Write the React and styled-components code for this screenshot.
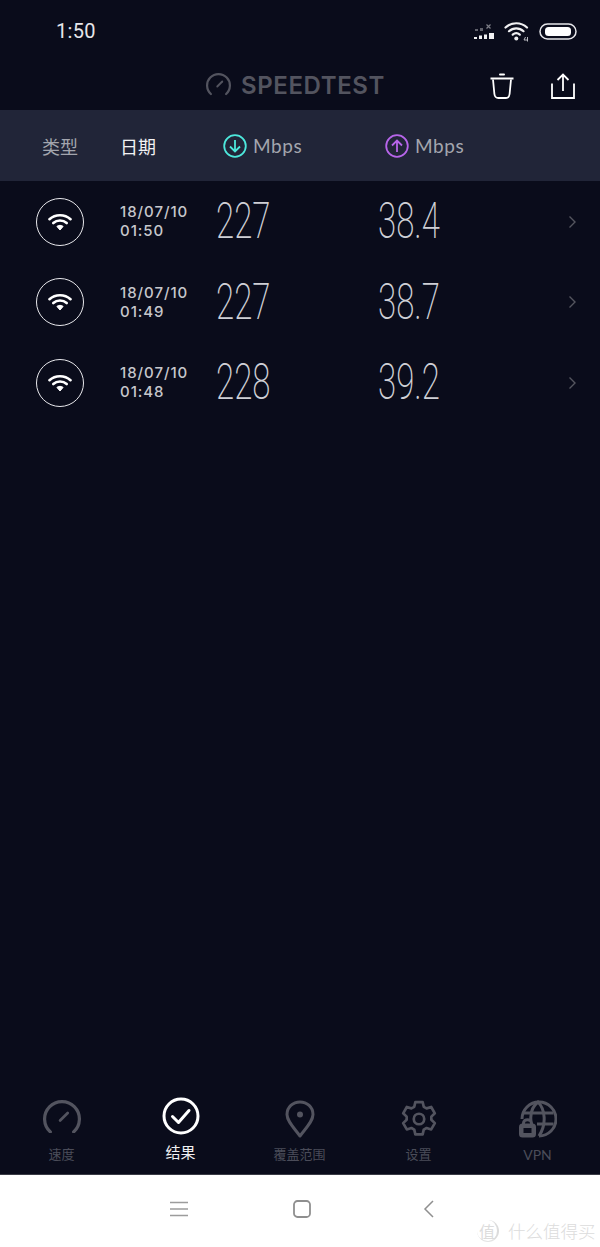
import React from "react";
import styled, { createGlobalStyle } from "styled-components";

const Global = createGlobalStyle`
  html, body { margin: 0; padding: 0; background: #0a0c1b; }
  #root { width: 600px; height: 1247px; }
  * { box-sizing: border-box; }
`;
const CJK = `"Noto Sans CJK SC", sans-serif`;

const Page = styled.div`
  width: 600px; height: 1247px; display: flex; flex-direction: column;
  background: #0a0c1b; font-family: Inter, ${CJK}; overflow: hidden; position: relative;
`;
const StatusBar = styled.div`
  height: 60px; display: flex; align-items: flex-start; justify-content: space-between;
  padding: 18px 23px 0 56px;
`;
const Clock = styled.span`
  font-family: Roboto, sans-serif; font-size: 20px; line-height: 26px; color: #e6e6ea; letter-spacing: .3px;
`;
const StatusIcons = styled.div`
  display: flex; align-items: center; gap: 9px; height: 26px;
`;
const TopBar = styled.header`
  height: 50px; display: grid; grid-template-columns: 206px 1fr auto; align-items: start; padding: 13px 25px 0 0;
`;
const Brand = styled.div`
  grid-column: 2; display: flex; align-items: flex-start; gap: 10px;
`;
const BrandName = styled.span`
  font-size: 24px; line-height: 26px; font-weight: 600; color: #53545f; letter-spacing: .6px;
`;
const TopActions = styled.div`
  display: flex; gap: 37px; grid-column: 3;
`;
const TableHead = styled.div`
  height: 71px; background: #212538; display: grid;
  grid-template-columns: 78px 103px 162px 1fr; padding-left: 42px; align-items: center;
`;
const HeadLabel = styled.span`
  font-size: 18px; line-height: 24px; color: ${p => (p.$active ? "#f2f2f4" : "#a3a5ae")}; font-family: ${CJK};
`;
const SpeedHead = styled.div`
  display: flex; align-items: center; gap: 6px;
`;
const Unit = styled.span`
  font-family: Lato, sans-serif; font-size: 19px; line-height: 24px; color: #a3a5ae; letter-spacing: .6px;
`;
const Rows = styled.div`
  flex: 1; padding-top: 0.5px;
`;
const Row = styled.div`
  height: 80.5px; display: grid; grid-template-columns: 84px 97px 162px 1fr 10px; padding: 0 22px 0 36px; align-items: center;
`;
const WifiBadge = styled.div`
  width: 48px; height: 48px; border-radius: 50%; border: 1.4px solid #e8e8ec;
  display: flex; align-items: center; justify-content: center;
`;
const DateBlock = styled.div`
  font-size: 15px; line-height: 19px; color: #c6c7cc; font-weight: 500; letter-spacing: .95px; margin-top: -1px;
`;
const Speed = styled.span`
  display: block; min-width: 0; font-family: Roboto, sans-serif; font-weight: 200; font-size: 50px; line-height: 50px;
  color: #cfd0d6; transform: scaleX(.66); transform-origin: left center; white-space: nowrap; margin: -1px 0 0 -1px;
`;
const Nav = styled.nav`
  height: 77px; display: grid; grid-template-columns: repeat(5, 119px); padding-left: 2px; flex: none;
`;
const NavItem = styled.div`
  display: flex; flex-direction: column; align-items: center;
`;
const NavIcon = styled.div`
  height: 40px; display: flex; align-items: flex-start; justify-content: center;
  padding-top: ${p => p.$drop || 0}px;
`;
const NavLabel = styled.span`
  font-family: ${p => (p.$latin ? "Lato, sans-serif" : CJK)};
  font-size: ${p => (p.$active ? 15 : p.$latin ? 14 : 13)}px; line-height: 18px;
  color: ${p => (p.$active ? "#f0f0f2" : "#4b4c59")};
  margin-top: ${p => (p.$active ? 6 : p.$latin ? 9 : 8)}px;
`;
const SystemBar = styled.div`
  height: 73px; flex: none; background: #fff; border-top: 1px solid #3a3b45; position: relative;
  padding: 25px 0 0 170px;
`;
const SysButtons = styled.div`
  display: grid; grid-template-columns: 123px 130px auto; align-items: center; width: max-content;
`;
const Watermark = styled.div`
  position: absolute; left: 477px; top: 45px; display: flex; align-items: center; gap: 9px; color: #dcdcdc;
`;
const WmBadge = styled.span`
  width: 22px; height: 22px; border-radius: 50%; border-right: 2px solid #dcdcdc; border-bottom: 1px solid #e4e4e4;
  display: flex; align-items: center; justify-content: center; font-family: ${CJK}; font-size: 16px; line-height: 20px;
`;
const WmText = styled.span`
  font-family: ${CJK}; font-size: 17.5px; line-height: 22px; white-space: nowrap; font-weight: 300;
`;

const Svg = ({ w, h, children, ...r }) => (
  <svg width={w} height={h} viewBox={`0 0 ${w} ${h}`} fill="none" style={{ display: "block" }} {...r}>{children}</svg>
);

const Gauge = ({ w, h, sw, c }) => {
  const r = w / 2 - sw / 2;
  const cx = w / 2, cy = r + sw / 2;
  const a = 42 * Math.PI / 180;
  const ex = r * Math.sin(a), ey = r * Math.cos(a);
  return (
    <Svg w={w} h={h}>
      <path d={`M${cx - ex} ${cy + ey}A${r} ${r} 0 1 1 ${cx + ex} ${cy + ey}`} stroke={c} strokeWidth={sw} strokeLinecap="round" />
      <path d={`M${cx - w * .05} ${cy + w * .04}L${cx + w * .15} ${cy - w * .16}`} stroke={c} strokeWidth={sw * .85} strokeLinecap="round" />
    </Svg>
  );
};

const Cell = () => (
  <Svg w={21} h={16}>
    <g fill="#60616b">
      <rect x="1" y="6" width="3" height="2" /><rect x="6" y="5" width="3" height="3" />
    </g>
    <path d="M12.500 1.500l4 4M16.500 1.500l-4 4" stroke="#7d7e87" strokeWidth="1.200" />
    <g fill="#f0f0f2">
      <rect x="0" y="14" width="3" height="2" /><rect x="5" y="12.500" width="3" height="3.500" />
      <rect x="10" y="11.500" width="3" height="4.500" /><rect x="15" y="10" width="5" height="6" />
    </g>
  </Svg>
);
const WifiGlyph = ({ w = 24, h = 18, sw = 2.6, c = "#fff" }) => (
  <svg width={w} height={h} viewBox="0 0 24 18" fill="none" style={{ display: "block" }}>
    <path d="M1.500 6.200C7.300.9 16.700.9 22.500 6.200" stroke={c} strokeWidth={sw} strokeLinecap="round" />
    <path d="M5.300 10C9 6.600 15 6.600 18.700 10" stroke={c} strokeWidth={sw} strokeLinecap="round" />
    <path d="M8.900 13.400C10.700 12 13.300 12 15.100 13.400L12 17z" fill={c} stroke={c} strokeWidth="1" strokeLinejoin="round" />
  </svg>
);
const StatusWifi = () => (
  <Svg w={26} h={22}>
    <path d="M1.500 7.500C7.500 1.800 17 1.800 23 7.500" stroke="#f0f0f2" strokeWidth="2.200" strokeLinecap="round" />
    <path d="M5 11.200C9.200 7.300 15.300 7.300 19.500 11.200" stroke="#f0f0f2" strokeWidth="2.200" strokeLinecap="round" />
    <path d="M8.700 14.700C10.900 12.800 13.600 12.800 15.800 14.700" stroke="#f0f0f2" strokeWidth="2.200" strokeLinecap="round" />
    <circle cx="12.300" cy="18.500" r="2" fill="#f0f0f2" />
    <path d="M21.500 17l-1.500 3h3M23.500 17v4.500" stroke="#b9bac0" strokeWidth="1" />
  </Svg>
);
const Battery = () => (
  <Svg w={38} h={17}>
    <rect x="1" y="1" width="36" height="15" rx="7.500" stroke="#e6e6ea" strokeWidth="1.500" />
    <rect x="6" y="4" width="26" height="9" rx="3.500" fill="#fff" />
  </Svg>
);
const Trash = () => (
  <Svg w={24} h={26}>
    <path d="M0.500 5.500H23.500" stroke="#fff" strokeWidth="2" />
    <path d="M10 1.500H14" stroke="#fff" strokeWidth="2" strokeLinecap="round" />
    <path d="M3 6.500L4.400 21C4.700 23.500 6 25 8.400 25H15.600C18 25 19.300 23.500 19.600 21L21 6.500" stroke="#fff" strokeWidth="1.800" />
  </Svg>
);
const Share = () => (
  <Svg w={24} h={26}>
    <path d="M1 10.500V25H23V10.500" stroke="#fff" strokeWidth="1.800" />
    <path d="M12 18V2M6.500 7L12 1.500L17.500 7" stroke="#fff" strokeWidth="1.800" />
  </Svg>
);
const SpeedIcon = ({ c, up }) => (
  <Svg w={24} h={24}>
    <circle cx="12" cy="12" r="10.800" stroke={c} strokeWidth="1.800" />
    {up
      ? <path d="M12 18V6.500M7 11.500L12 6.500L17 11.500" stroke={c} strokeWidth="1.800" />
      : <path d="M12 6V17.500M7 12.500L12 17.500L17 12.500" stroke={c} strokeWidth="1.800" />}
  </Svg>
);
const Chevron = () => (
  <Svg w={9} h={14}>
    <path d="M1.500 1.500L7 7L1.500 12.500" stroke="#55565f" strokeWidth="1.400" />
  </Svg>
);
const NC = "#53545f";
const CheckIcon = () => (
  <Svg w={38} h={38}>
    <circle cx="19" cy="19" r="17" stroke="#fff" strokeWidth="3" />
    <path d="M10.500 19.500L16.500 25.500L27 13.500" stroke="#fff" strokeWidth="3" strokeLinecap="round" strokeLinejoin="round" />
  </Svg>
);
const Pin = () => (
  <Svg w={30} h={38}>
    <path d="M15 36C9 28 2 21 2 14.500C2 7 8 2 15 2C22 2 28 7 28 14.500C28 21 21 28 15 36Z" stroke={NC} strokeWidth="3" strokeLinejoin="round" />
    <circle cx="15" cy="14.500" r="3" fill={NC} />
  </Svg>
);
const Gear = () => (
  <svg width="38" height="38" viewBox="0 0 24 24" fill="none" stroke={NC} strokeWidth="1.700" strokeLinejoin="round" style={{ display: "block" }}>
    <path d="M9.700 1.300h4.600l.7 3 1.800 1 2.900-.9 2.300 4-2.200 2.100v2l2.200 2.100-2.300 4-2.900-.9-1.800 1-.7 3H9.700l-.7-3-1.800-1-2.900.9-2.300-4 2.200-2.100v-2L2 8.400l2.300-4 2.900.9 1.800-1z" />
    <circle cx="12" cy="12" r="3.300" />
  </svg>
);
const Globe = () => (
  <Svg w={38} h={38}>
    <path d="M3 19A17 17 0 1 1 20 36" stroke={NC} strokeWidth="3" />
    <path d="M12 21C11 13 14 6 19 2C26 9 28 24 20 36" stroke={NC} strokeWidth="3" />
    <path d="M3.500 13H34.500M18 24H34.500" stroke={NC} strokeWidth="3" />
    <rect x="1.500" y="25" width="14" height="11" rx="2" fill={NC} stroke={NC} strokeWidth="3" />
    <rect x="4.500" y="28" width="8" height="5" fill="#0a0c1b" />
    <path d="M4.500 25V23C4.500 18.500 12.500 18.500 12.500 23V25" stroke={NC} strokeWidth="3" />
  </Svg>
);
const Menu = () => (
  <Svg w={18} h={16}>
    <path d="M0 1.500H18M0 8H18M0 14.500H18" stroke="#9c9c9c" strokeWidth="1.600" />
  </Svg>
);
const Home = () => (
  <Svg w={18} h={18}>
    <rect x="1" y="1" width="16" height="16" rx="3.500" stroke="#8f8f8f" strokeWidth="1.800" />
  </Svg>
);
const Back = () => (
  <Svg w={11} h={18}>
    <path d="M10 1L2 9L10 17" stroke="#8f8f8f" strokeWidth="1.500" />
  </Svg>
);

const data = [
  ["18/07/10", "01:50", "227", "38.4"],
  ["18/07/10", "01:49", "227", "38.7"],
  ["18/07/10", "01:48", "228", "39.2"],
];

export default function App() {
  return (
    <Page>
      <Global />
      <StatusBar>
        <Clock>1:50</Clock>
        <StatusIcons>
          <Cell />
          <StatusWifi />
          <Battery />
        </StatusIcons>
      </StatusBar>
      <TopBar>
        <Brand>
          <Gauge w={25} h={23} sw={2.2} c="#53545f" />
          <BrandName>SPEEDTEST</BrandName>
        </Brand>
        <TopActions>
          <Trash />
          <Share />
        </TopActions>
      </TopBar>
      <TableHead>
        <HeadLabel>类型</HeadLabel>
        <HeadLabel $active>日期</HeadLabel>
        <SpeedHead><SpeedIcon c="#4de8dc" /><Unit>Mbps</Unit></SpeedHead>
        <SpeedHead><SpeedIcon c="#b765ea" up /><Unit>Mbps</Unit></SpeedHead>
      </TableHead>
      <Rows>
        {data.map(([d, t, down, up]) => (
          <Row key={t}>
            <WifiBadge><WifiGlyph /></WifiBadge>
            <DateBlock>{d}<br />{t}</DateBlock>
            <Speed>{down}</Speed>
            <Speed>{up}</Speed>
            <Chevron />
          </Row>
        ))}
      </Rows>
      <Nav>
        <NavItem>
          <NavIcon $drop={3}><Gauge w={38} h={33} sw={3.2} c={NC} /></NavIcon>
          <NavLabel>速度</NavLabel>
        </NavItem>
        <NavItem>
          <NavIcon><CheckIcon /></NavIcon>
          <NavLabel $active>结果</NavLabel>
        </NavItem>
        <NavItem>
          <NavIcon $drop={3}><Pin /></NavIcon>
          <NavLabel>覆盖范围</NavLabel>
        </NavItem>
        <NavItem>
          <NavIcon $drop={3}><Gear /></NavIcon>
          <NavLabel>设置</NavLabel>
        </NavItem>
        <NavItem>
          <NavIcon $drop={3}><Globe /></NavIcon>
          <NavLabel $latin>VPN</NavLabel>
        </NavItem>
      </Nav>
      <SystemBar>
        <SysButtons>
          <Menu />
          <Home />
          <Back />
        </SysButtons>
        <Watermark>
          <WmBadge>值</WmBadge>
          <WmText>什么值得买</WmText>
        </Watermark>
      </SystemBar>
    </Page>
  );
}
